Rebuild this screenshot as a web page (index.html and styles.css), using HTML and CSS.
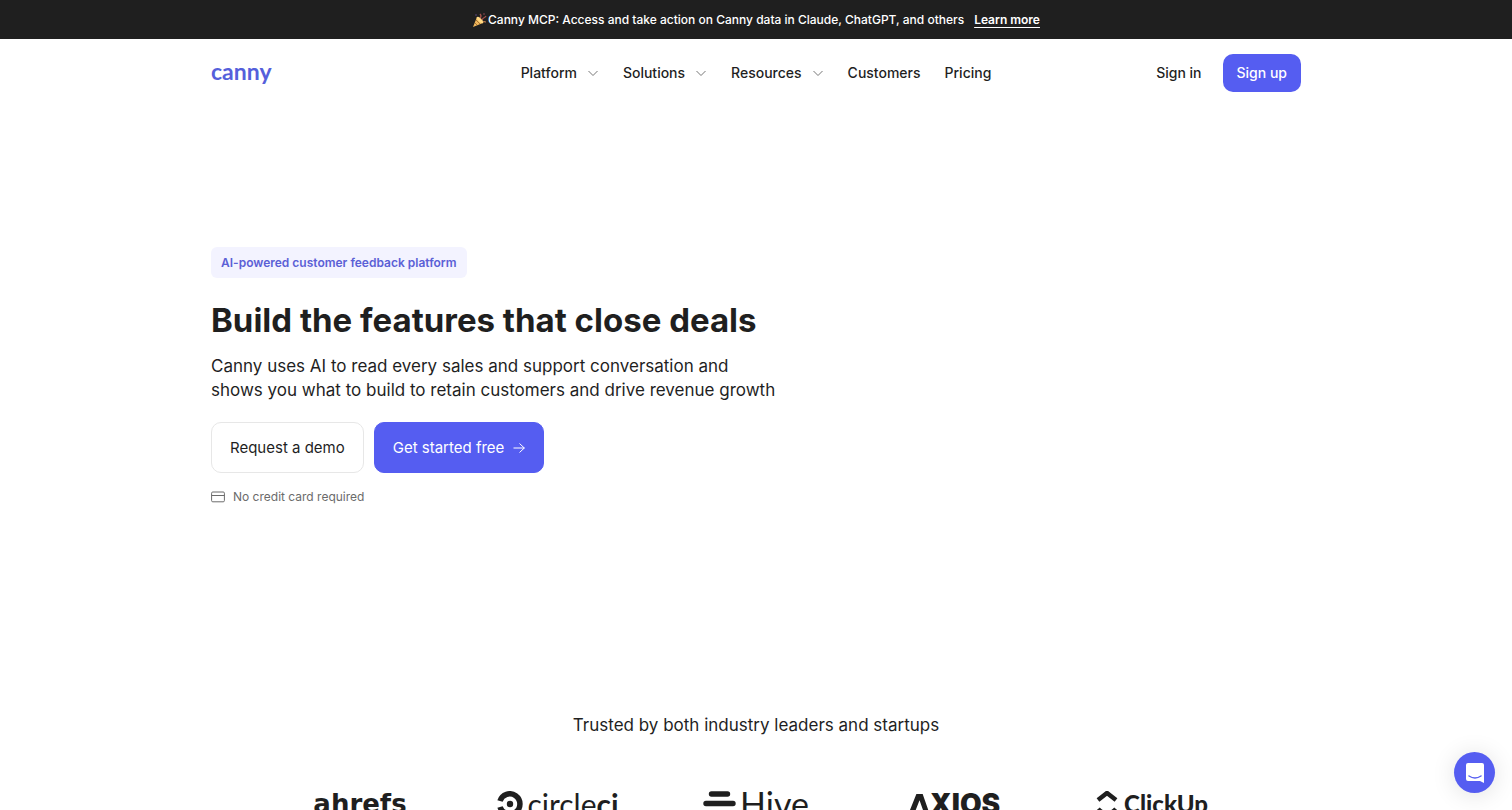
FILE: index.html
```html
<!DOCTYPE html>
<html lang="en">
<head>
<meta charset="utf-8">
<meta name="viewport" content="width=device-width, initial-scale=1">
<title>Canny</title>
<link rel="stylesheet" href="styles.css">
</head>
<body>
<div class="promo">
  <p class="promo-text"><svg class="party" viewBox="0 0 16 16" aria-hidden="true"><path d="M5 5 1 15l10-4Z" fill="#eeb65c"/><path d="m4 8 4 4M3 11l2 2" stroke="#a87532" stroke-width="1"/><ellipse cx="8" cy="8" rx="1.8" ry="4.2" transform="rotate(-45 8 8)" fill="#ffda83"/><path d="M8 6c2-2 1-3 0-4M10 8c1-3 3-2 4-4" fill="none" stroke="#a4514b" stroke-width="1.3"/><path d="M11 10c1-1 2 0 3 0" fill="none" stroke="#ba794a" stroke-width="1.2"/><circle cx="4" cy="3" r=".7" fill="#6a529b"/><circle cx="12" cy="2" r=".7" fill="#b85565"/></svg>Canny MCP: Access and take action on Canny data in Claude, ChatGPT, and others</p>
  <a class="promo-link" href="#">Learn more</a>
</div>
<header class="header">
  <a class="brand" href="#">canny</a>
  <nav class="nav" aria-label="Main">
    <button class="nav-item" type="button">Platform<svg class="chevron" viewBox="0 0 12 12" aria-hidden="true"><path d="m1.5 4 4.5 4.5L10.5 4"/></svg></button>
    <button class="nav-item" type="button">Solutions<svg class="chevron" viewBox="0 0 12 12" aria-hidden="true"><path d="m1.5 4 4.5 4.5L10.5 4"/></svg></button>
    <button class="nav-item" type="button">Resources<svg class="chevron" viewBox="0 0 12 12" aria-hidden="true"><path d="m1.5 4 4.5 4.5L10.5 4"/></svg></button>
    <a class="nav-item" href="#">Customers</a>
    <a class="nav-item" href="#">Pricing</a>
  </nav>
  <div class="account">
    <a class="nav-item" href="#">Sign in</a>
    <a class="signup" href="#">Sign up</a>
  </div>
</header>
<main>
  <section class="hero">
    <p class="tag">AI-powered customer feedback platform</p>
    <h1 class="title">Build the features that close deals</h1>
    <p class="lead">Canny uses AI to read every sales and support conversation and<br>shows you what to build to retain customers and drive revenue growth</p>
    <div class="actions">
      <a class="button" href="#">Request a demo</a>
      <a class="button primary" href="#">Get started free<svg class="arrow" viewBox="0 0 12 12" aria-hidden="true"><path d="M.5 6h11M6.5 1.5 11.3 6l-4.8 4.5"/></svg></a>
    </div>
    <p class="note"><svg class="card" viewBox="0 0 14 12" aria-hidden="true"><rect x=".6" y="1" width="12.8" height="9.8" rx="1.2"/><path d="M.6 4.5h12.8"/></svg>No credit card required</p>
  </section>
  <section class="trusted">
    <h2 class="trusted-title">Trusted by both industry leaders and startups</h2>
    <ul class="logos">
      <li class="logo ahrefs">ahrefs</li>
      <li class="logo circleci"><svg class="circle-mark" viewBox="0 0 26 26" aria-hidden="true"><path d="M3 10a10.200 10.200 0 1 1 0 6" fill="none" stroke="currentColor" stroke-width="5.500"/><circle cx="13" cy="13" r="3.200" fill="currentColor"/></svg><span>circle<b>ci</b></span></li>
      <li class="logo hive"><svg class="hive-mark" viewBox="0 0 33 26" aria-hidden="true"><path d="M8.500 3h16M3 12.500h27M8.500 22h16" stroke="currentColor" stroke-width="5.400" stroke-linecap="round"/></svg>Hive</li>
      <li class="logo axios"><svg class="axios-a" viewBox="0 0 21 20" role="img" aria-label="A"><path d="M0 20 8 0h6l7 20h-5L11 6 5.500 20Z" fill="currentColor"/></svg>XIOS</li>
      <li class="logo clickup"><svg class="click-mark" viewBox="0 0 22 26" aria-hidden="true"><path d="m2 9 9-7 9 7" fill="none" stroke="currentColor" stroke-width="4.500"/><path d="M2 18c5 6 13 6 18 0" fill="none" stroke="currentColor" stroke-width="4.500"/></svg>ClickUp</li>
    </ul>
  </section>
</main>
<button class="chat" type="button" aria-label="Open chat"><svg class="chat-icon" viewBox="0 0 20 22" aria-hidden="true"><path d="M3 1h14q2 0 2 2v18l-4-2H3q-2 0-2-2V3q0-2 2-2Z" fill="#fff"/><path d="M4 14q6 4 12 0" fill="none" stroke="#555df1" stroke-width="1.5" stroke-linecap="round"/></svg></button>
</body>
</html>
```
FILE: styles.css
```css
* { box-sizing: border-box; }
html { scrollbar-width: none; }
body { margin: 0; background: #fff; color: #1f1f1f; font-family: Inter, sans-serif; font-size: 14px; line-height: 20px; }
p, h1, h2, ul { margin: 0; padding: 0; }
a { color: inherit; text-decoration: none; }
button { font: inherit; color: inherit; border: 0; background: none; padding: 0; cursor: pointer; }
svg { flex: none; }
.promo { display: flex; align-items: center; justify-content: center; gap: 10px; min-height: 39px; background: #1f1f1f; color: #fff; font-size: 12px; font-weight: 500; }
.promo-text { display: flex; align-items: center; }
.party { width: 16px; height: 16px; }
.promo-link { font-weight: 600; text-decoration: underline; text-underline-offset: 3px; }
.header, .hero { max-width: 1138px; margin: 0 auto; padding: 0 24px; }
.header { display: grid; grid-template-columns: 1fr auto 1fr; align-items: center; min-height: 68px; }
.brand { padding-bottom: 4px; color: #555fdb; font-family: Lato, sans-serif; font-size: 23px; font-weight: 700; line-height: 28px; }
.nav { display: flex; gap: 24px; }
.nav-item { display: flex; align-items: center; gap: 10px; font-weight: 500; }
.chevron { width: 12px; height: 12px; fill: none; stroke: #777; stroke-width: 1; }
.account { display: flex; align-items: center; justify-content: flex-end; gap: 21px; }
.signup { padding: 9px 14px; border-radius: 10px; background: #555df1; color: #fff; font-weight: 500; }
.hero { display: flex; flex-direction: column; align-items: flex-start; padding-top: 140px; }
.tag { padding: 6px 10px; border-radius: 6px; background: #f3f3ff; color: #5b60d6; font-size: 12px; line-height: 19px; font-weight: 600; }
.title { margin-top: 20px; font-size: 33px; line-height: 44px; font-weight: 700; }
.lead { margin-top: 12px; font-size: 17px; line-height: 24px; }
.actions { display: flex; gap: 10px; margin-top: 20px; }
.button { display: flex; align-items: center; gap: 9px; padding: 13px 18px; border: 1px solid #e7e7e7; border-radius: 10px; font-size: 15px; line-height: 23px; }
.primary { border-color: #555df1; background: #555df1; color: #fff; }
.arrow { width: 12px; height: 12px; fill: none; stroke: currentColor; }
.note { display: flex; align-items: center; gap: 8px; margin-top: 14px; color: #6b6b6b; font-size: 12px; }
.card { width: 14px; height: 12px; fill: none; stroke: currentColor; }
.trusted { padding-top: 206px; text-align: center; }
.trusted-title { font-size: 17px; line-height: 24px; font-weight: 400; }
.logos { display: grid; grid-template-columns: repeat(5, 1fr); max-width: 990px; margin: 47px auto; list-style: none; }
.logo { display: flex; align-items: center; justify-content: center; height: 40px; font-size: 26px; line-height: 32px; }
.ahrefs { font-family: "DejaVu Sans", sans-serif; font-weight: 700; }
.circleci { gap: 4px; font-family: Lato, sans-serif; font-size: 30px; }
.circle-mark { width: 26px; height: 26px; }
.hive { gap: 4px; font-family: Lato, sans-serif; font-size: 34px; }
.hive-mark { width: 33px; height: 26px; }
.axios { font-size: 28px; font-weight: 900; }
.axios-a { width: 22px; height: 21px; }
.clickup { gap: 6px; font-family: Lato, sans-serif; font-size: 24px; font-weight: 900; }
.click-mark { width: 22px; height: 26px; }
.chat { position: fixed; right: 17px; bottom: 17px; display: flex; align-items: center; justify-content: center; width: 41px; height: 41px; border-radius: 50%; background: #555df1; box-shadow: 0 2px 24px rgb(0 0 0 / 12%); }
.chat-icon { width: 20px; height: 22px; }
```
